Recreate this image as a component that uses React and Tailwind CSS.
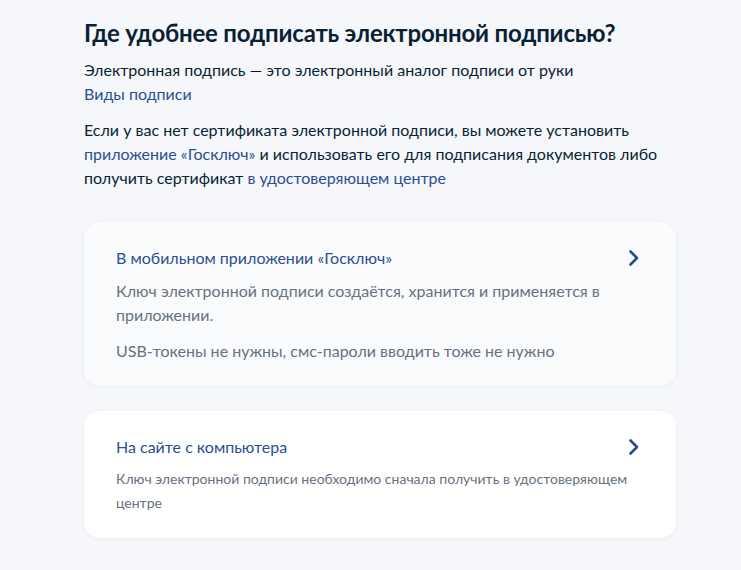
const links = 'text-[#2d4e92]';

const Option = ({ title, children, muted }) => (
  <div className={`rounded-2xl ${muted ? 'bg-[#fafbfd]' : 'bg-white'} shadow-[0_1px_4px_rgba(40,60,100,0.06)] px-8 pt-[24px] pb-[23px]`}>
    <div className="flex items-center justify-between">
      <span className={`${links} text-[16px] leading-6`}>{title}</span>
      <svg width="14" height="18" viewBox="0 0 14 18" className="mr-[3px]">
        <path d="M3.5 2.5 L10 9 L3.5 15.5" fill="none" stroke="#2a4a8e" strokeWidth="2.6" strokeLinecap="round" strokeLinejoin="round" />
      </svg>
    </div>
    {children}
  </div>
);

export default function App() {
  return (
    <div className="min-h-[570px] bg-[#f5f7fb] text-[#0b1f33]" style={{ fontFamily: 'Lato, "Open Sans", sans-serif' }}>
      <div className="pl-[84px] pr-[65px] pt-[17px] pb-8">
        <h1 className="text-[24px] leading-8 font-bold tracking-[-0.2px]">Где удобнее подписать электронной подписью?</h1>
        <p className="mt-[9px] text-[16px] leading-6">Электронная подпись — это электронный аналог подписи от руки</p>
        <span className={`block text-[16px] leading-6 ${links}`}>Виды подписи</span>
        <p className="mt-3 text-[16px] leading-6">
          Если у вас нет сертификата электронной подписи, вы можете установить{' '}
          <span className={links}>приложение «Госключ»</span> и использовать его для подписания документов либо
          получить сертификат <span className={links}>в удостоверяющем центре</span>
        </p>

        <div className="mt-[32px] flex flex-col gap-[25px]">
          <Option title="В мобильном приложении «Госключ»" muted>
            <p className="mt-[9px] text-[16px] leading-6 text-[#66727f] pr-10">
              Ключ электронной подписи создаётся, хранится и применяется в приложении.
            </p>
            <p className="mt-3 text-[16px] leading-6 text-[#66727f]">USB-токены не нужны, смс-пароли вводить тоже не нужно</p>
          </Option>
          <Option title="На сайте с компьютера">
            <p className="mt-[8px] text-[14px] leading-6 text-[#66727f]">
              Ключ электронной подписи необходимо сначала получить в удостоверяющем центре
            </p>
          </Option>
        </div>
      </div>
    </div>
  );
}
